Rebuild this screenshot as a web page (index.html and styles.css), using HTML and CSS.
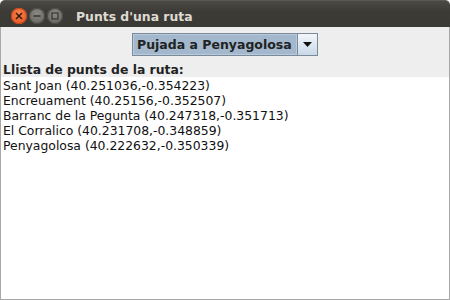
FILE: index.html
```html
<!DOCTYPE html>
<html lang="ca">
<head>
  <meta charset="UTF-8" />
  <title>Punts d'una ruta</title>
  <link rel="stylesheet" href="styles.css">
</head>
<body>
  <div class="window">
    <div class="titlebar">
      <div class="controls">
        <span class="btn close">
          <svg width="8" height="8" viewBox="0 0 8 8"><path d="M1 1L7 7M7 1L1 7" stroke="#3a1a0a" stroke-width="1.6"/></svg>
        </span>
        <span class="btn">
          <svg width="8" height="8" viewBox="0 0 8 8"><path d="M0.5 4H7.5" stroke="#3c3b37" stroke-width="1.6"/></svg>
        </span>
        <span class="btn">
          <svg width="8" height="8" viewBox="0 0 8 8"><rect x="1" y="1" width="6" height="6" fill="none" stroke="#3c3b37" stroke-width="1.3"/></svg>
        </span>
      </div>
      <div class="title">Punts d'una ruta</div>
    </div>

    <div class="content">
      <div class="top-panel">
        <div class="combo-row">
          <div class="combo">
            <div class="combo-value">Pujada a Penyagolosa</div>
            <div class="combo-arrow">
              <svg width="9" height="5" viewBox="0 0 9 5"><path d="M0 0H9L4.5 5Z" fill="#111"/></svg>
            </div>
          </div>
        </div>
        <div class="list-label">Llista de punts de la ruta:</div>
      </div>
      <div class="point-list">
        <div>Sant Joan (40.251036,-0.354223)</div>
        <div>Encreuament (40.25156,-0.352507)</div>
        <div>Barranc de la Pegunta (40.247318,-0.351713)</div>
        <div>El Corralico (40.231708,-0.348859)</div>
        <div>Penyagolosa (40.222632,-0.350339)</div>
      </div>
    </div>
  </div>
</body>
</html>
```

FILE: styles.css
```css
body {
  margin: 0;
  padding: 0;
  background: #ffffff;
  font-family: 'DejaVu Sans', sans-serif;
}

.window {
  width: 450px;
  height: 300px;
  display: flex;
  flex-direction: column;
}

.titlebar {
  height: 27px;
  flex: none;
  display: flex;
  align-items: center;
  background: linear-gradient(#4a4944, #3c3b37 40%, #3a3934);
  border-top: 1px solid #5a5954;
  border-radius: 5px 5px 0 0;
  box-sizing: border-box;
  padding: 4px 0 0 11px;
}

.controls {
  display: flex;
  gap: 2px;
}

.btn {
  width: 16px;
  height: 16px;
  border-radius: 50%;
  display: flex;
  align-items: center;
  justify-content: center;
  background: radial-gradient(circle at 50% 35%, #8a8984, #5f5e5a);
  box-shadow: inset 0 0 0 1px #4a4945;
}

.btn.close {
  background: radial-gradient(circle at 50% 35%, #f7834e, #e24f19);
  box-shadow: inset 0 0 0 1px #c8461a;
}

.title {
  margin-left: 13px;
  color: #dfdbd2;
  font-family: 'DejaVu Sans', sans-serif;
  font-weight: bold;
  font-size: 12.4px;
}

.content {
  flex: 1;
  display: flex;
  flex-direction: column;
  border: 1px solid #a8a8a8;
  border-top: none;
  background: #ffffff;
}

.top-panel {
  background: #eeeeee;
  padding-top: 6px;
}

.combo-row {
  display: flex;
  justify-content: center;
}

.combo {
  display: flex;
  width: 186px;
  height: 23px;
  box-sizing: border-box;
  border: 1px solid #7a8a99;
  background: #a3b8cc;
}

.combo-value {
  flex: 1;
  display: flex;
  align-items: center;
  padding-left: 3px;
  font-size: 12.5px;
  font-weight: bold;
  color: #222;
  border: 1px solid #b8cadb;
}

.combo-arrow {
  width: 19px;
  display: flex;
  align-items: center;
  justify-content: center;
  border-left: 1px solid #7a8a99;
  background: linear-gradient(#f2f6fa, #c9d9e8);
}

.list-label {
  font-size: 12.4px;
  font-weight: bold;
  color: #222;
  padding: 7px 0 0 2px;
  line-height: 14px;
}

.point-list {
  font-size: 12.4px;
  color: #111;
  line-height: 15px;
  padding: 1px 0 0 2px;
}
```
